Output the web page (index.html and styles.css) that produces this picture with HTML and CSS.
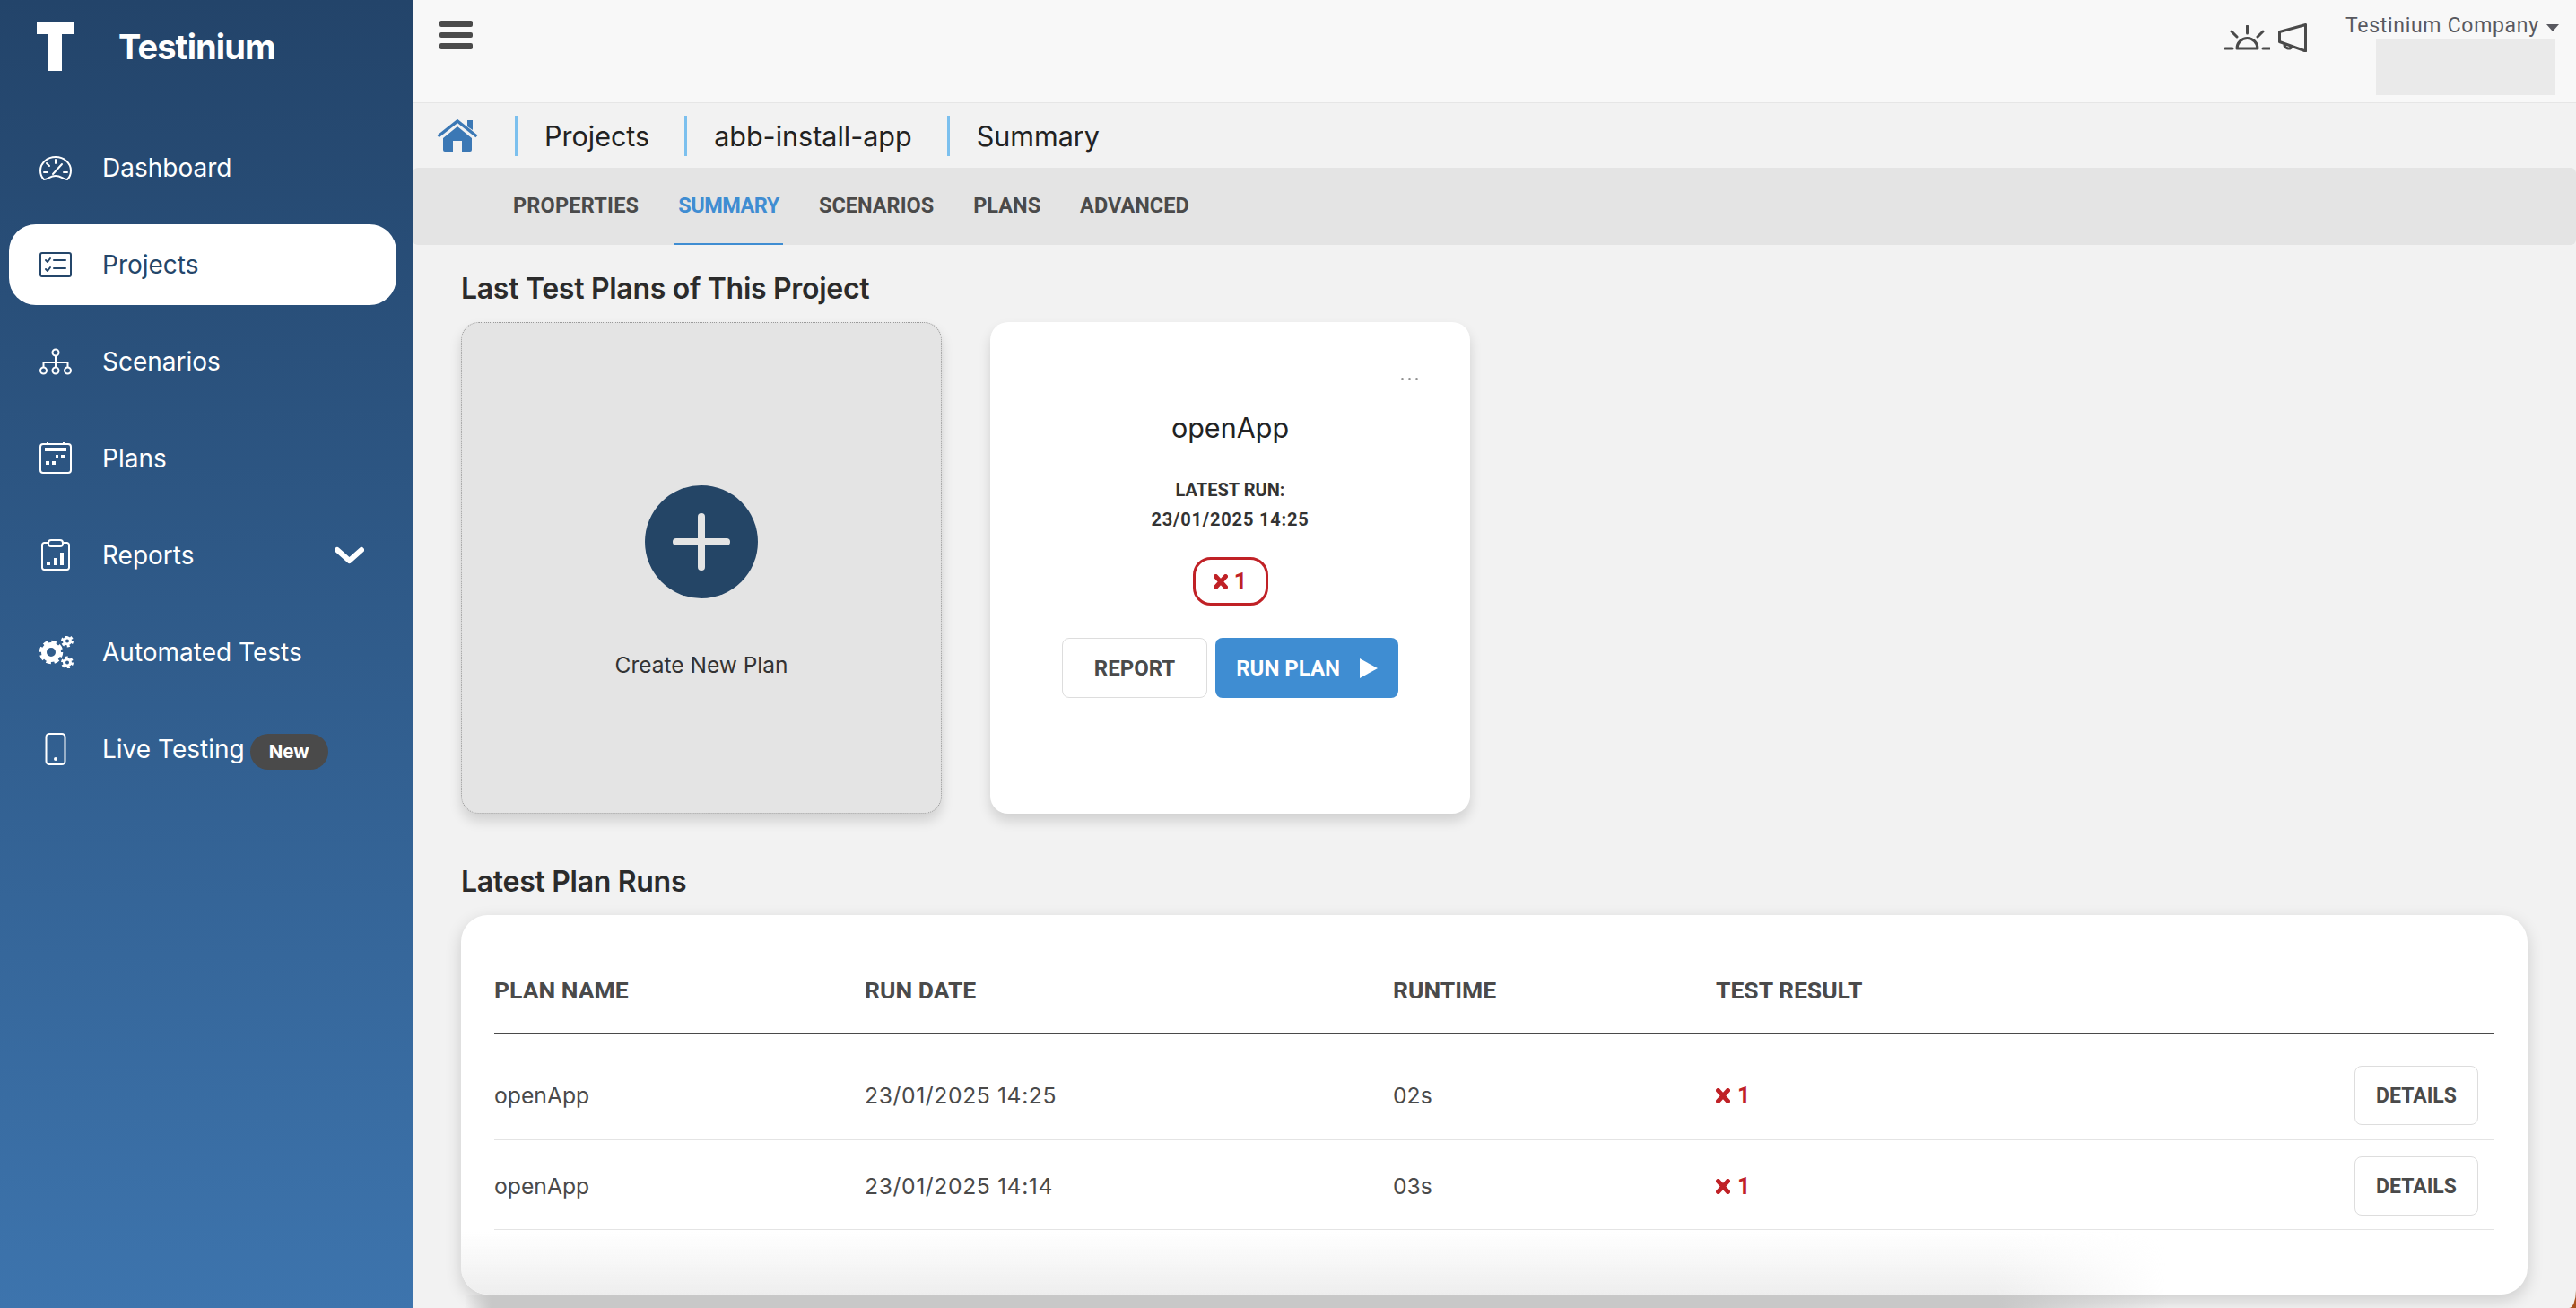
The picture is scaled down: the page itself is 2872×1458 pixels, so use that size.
FILE: index.html
```html
<!DOCTYPE html>
<html lang="en">
<head>
    <meta charset="UTF-8">
    <title>Testinium - Summary</title>
    <link rel="stylesheet" href="styles.css">
</head>
<body>
    <div class="app">
        <aside class="sidebar">
            <div class="brand">
                <svg class="brand-logo" viewBox="0 0 41 54"><path d="M0 0H41V13H28V54H13V13H0Z" fill="#fff"/></svg>
                <span class="brand-name">Testinium</span>
            </div>
            <nav class="nav">
                <a class="nav-item">
                    <svg class="nav-icon" viewBox="0 0 36 36"><path d="M5 31C1.500 28 1 24 1 21A17 15 0 0 1 35 21C35 24 34.500 28 31 31C27 31 24 27 18 27C12 27 9 31 5 31Z"/><path d="M18 9V13M8 13L11 16M5 23H9M27 23H31M15 25L25 14"/></svg>
                    <span>Dashboard</span>
                </a>
                <a class="nav-item active">
                    <svg class="nav-icon" viewBox="0 0 36 36"><rect x="1" y="5" width="34" height="26" rx="2"/><path d="M7 13L9 15L12 11M7 23L9 25L12 21M16 13H29M16 22H29"/></svg>
                    <span>Projects</span>
                </a>
                <a class="nav-item">
                    <svg class="nav-icon" viewBox="0 0 36 36"><circle cx="18" cy="8" r="3.500"/><circle cx="4.500" cy="28" r="3.500"/><circle cx="18" cy="28" r="3.500"/><circle cx="31.500" cy="28" r="3.500"/><path d="M18 12V24M4.500 24V19H31.500V24"/></svg>
                    <span>Scenarios</span>
                </a>
                <a class="nav-item">
                    <svg class="nav-icon" viewBox="0 0 36 36"><rect x="1" y="2" width="34" height="32" rx="3"/><path d="M9 0V2M27 0V2"/><path class="solid" d="M6 6H30V10H6ZM18 14H21V17H18ZM24 14H28V17H24ZM7 21H11V25H7ZM14 21H18V25H14Z"/></svg>
                    <span>Plans</span>
                </a>
                <a class="nav-item">
                    <svg class="nav-icon" viewBox="0 0 36 36"><path d="M9 4H5A2.500 2.500 0 0 0 3 6V32A2.500 2.500 0 0 0 5 34H31A2.500 2.500 0 0 0 33 32V6A2.500 2.500 0 0 0 31 4H27"/><rect x="10" y="1" width="16" height="7" rx="3"/><path class="solid" d="M8 25H12V29H8ZM16 21H20V29H16ZM23 15H27V29H23Z"/></svg>
                    <span>Reports</span>
                    <svg class="nav-chevron" viewBox="0 0 33 20"><path d="M3 4L16.500 16L30 4"/></svg>
                </a>
                <a class="nav-item">
                    <svg class="nav-icon gears" viewBox="0 0 38 36">
                        <circle class="gear-ring" cx="13" cy="18" r="8"/><circle class="gear-teeth" cx="13" cy="18" r="11"/>
                        <circle class="gear-ring small" cx="31" cy="5.500" r="3.500"/><circle class="gear-teeth small" cx="31" cy="5.500" r="5.500"/>
                        <circle class="gear-ring small" cx="31" cy="29.500" r="3.500"/><circle class="gear-teeth small" cx="31" cy="29.500" r="5.500"/>
                    </svg>
                    <span>Automated Tests</span>
                </a>
                <a class="nav-item">
                    <svg class="nav-icon" viewBox="0 0 36 36"><rect x="7.500" y="1" width="21" height="34" rx="3.500"/><circle class="solid" cx="18" cy="29" r="2"/></svg>
                    <span>Live Testing</span>
                    <span class="new-pill">New</span>
                </a>
            </nav>
        </aside>

        <div class="content">
            <header class="topbar">
                <div class="hamburger"><i></i><i></i><i></i></div>
                <div class="topbar-right">
                    <svg class="sun" viewBox="0 0 51 28"><path d="M1 26H9M43 26H51M25.500 1V9M8 7L14 13M43 7L37 13M14 26A11.500 11.500 0 0 1 37 26Z"/></svg>
                    <svg class="horn" viewBox="0 0 32 32"><path d="M1.500 9.500L30.500 1.500V31L1.500 20.500ZM7 23A4.500 4.500 0 0 0 15.500 25.500"/></svg>
                    <div class="company">
                        <div class="company-name">Testinium Company <i class="caret"></i></div>
                        <div class="company-box"></div>
                    </div>
                </div>
            </header>

            <div class="crumbs">
                <svg class="home" viewBox="0 0 46 36">
                    <path d="M34 1H40V12L34 8Z"/>
                    <path d="M1.500 19L23 2L44.500 19" fill="none" stroke="#3b78b5" stroke-width="3.500"/>
                    <path d="M7 21L23 8L39 21V34A2 2 0 0 1 37 36H28V24H18V36H9A2 2 0 0 1 7 34Z"/>
                </svg>
                <span class="crumb">Projects</span>
                <span class="crumb">abb-install-app</span>
                <span class="crumb">Summary</span>
            </div>

            <div class="tabs">
                <a class="tab first">PROPERTIES</a>
                <a class="tab active">SUMMARY</a>
                <a class="tab">SCENARIOS</a>
                <a class="tab">PLANS</a>
                <a class="tab">ADVANCED</a>
            </div>

            <main class="main">
                <h2 class="section-title">Last Test Plans of This Project</h2>
                <div class="cards">
                    <div class="card card-new">
                        <div class="plus"></div>
                        <p class="new-label">Create New Plan</p>
                    </div>
                    <div class="card card-plan">
                        <div class="more"><i></i><i></i><i></i></div>
                        <h3 class="plan-name">openApp</h3>
                        <p class="latest">LATEST RUN:</p>
                        <p class="latest date">23/01/2025 14:25</p>
                        <div class="fail-badge">
                            <svg class="x-mark" viewBox="0 0 16 17"><path d="M2.500 2.500L13.500 14.500M13.500 2.500L2.500 14.500"/></svg>
                            <span>1</span>
                        </div>
                        <div class="plan-actions">
                            <button class="btn">REPORT</button>
                            <button class="btn btn-run">RUN PLAN <svg class="play" viewBox="0 0 20 22"><path d="M0 0L20 11L0 22Z"/></svg></button>
                        </div>
                    </div>
                </div>

                <h2 class="section-title runs-title">Latest Plan Runs</h2>
                <div class="runs">
                    <table class="runs-table">
                        <thead>
                            <tr>
                                <th class="col-name">PLAN NAME</th>
                                <th class="col-date">RUN DATE</th>
                                <th class="col-time">RUNTIME</th>
                                <th>TEST RESULT</th>
                                <th></th>
                            </tr>
                        </thead>
                        <tbody>
                            <tr>
                                <td>openApp</td>
                                <td class="run-date">23/01/2025 14:25</td>
                                <td>02s</td>
                                <td><span class="fail"><svg class="x-mark" viewBox="0 0 16 17"><path d="M2.500 2.500L13.500 14.500M13.500 2.500L2.500 14.500"/></svg>1</span></td>
                                <td class="cell-action"><button class="btn btn-details">DETAILS</button></td>
                            </tr>
                            <tr>
                                <td>openApp</td>
                                <td class="run-date">23/01/2025 14:14</td>
                                <td>03s</td>
                                <td><span class="fail"><svg class="x-mark" viewBox="0 0 16 17"><path d="M2.500 2.500L13.500 14.500M13.500 2.500L2.500 14.500"/></svg>1</span></td>
                                <td class="cell-action"><button class="btn btn-details">DETAILS</button></td>
                            </tr>
                        </tbody>
                    </table>
                    <div class="runs-fade"></div>
                    <div class="runs-strip"></div>
                </div>
            </main>
        </div>
    </div>
</body>
</html>
```

FILE: styles.css
```css
* {
    box-sizing: border-box;
}
html, body {
    height: 100%;
}
body {
    margin: 0;
    overflow: hidden;
    font-family: Inter, "Liberation Sans", sans-serif;
    background: #f2f2f2;
    color: #333;
}
h2, h3, p {
    margin: 0;
}
.app {
    display: flex;
    height: 1458px;
    background: #a8521e;
}

/* sidebar */
.sidebar {
    width: 460px;
    flex: none;
    background: linear-gradient(#23446a, #3d74ad);
    color: #fff;
}
.brand {
    display: flex;
    align-items: flex-start;
    height: 142px;
    padding: 25px 0 0 41px;
}
.brand-logo {
    width: 41px;
    height: 54px;
}
.brand-name {
    margin: 5px 0 0 50px;
    font-size: 38px;
    font-weight: 700;
    letter-spacing: -0.9px;
    line-height: 44px;
}
.nav {
    display: flex;
    flex-direction: column;
    gap: 18px;
    padding: 0 18px 0 10px;
}
.nav-item {
    display: flex;
    align-items: center;
    height: 90px;
    padding-left: 34px;
    border-radius: 30px;
    font-size: 28px;
}
.nav-item.active {
    background: #fff;
    color: #24466a;
}
.nav-icon {
    width: 36px;
    height: 36px;
    margin-right: 34px;
    flex: none;
    fill: none;
    stroke: currentColor;
    stroke-width: 2;
    stroke-linecap: round;
    stroke-linejoin: round;
}
.nav-icon .solid {
    fill: currentColor;
    stroke: none;
}
.gears {
    width: 38px;
    margin-right: 32px;
}
.gear-ring {
    stroke-width: 6;
}
.gear-teeth {
    stroke-width: 4.500;
    stroke-dasharray: 5.200 3.440;
    stroke-linecap: butt;
}
.gear-ring.small {
    stroke-width: 3;
}
.gear-teeth.small {
    stroke-width: 3;
    stroke-dasharray: 2.900 2.860;
}
.nav-chevron {
    width: 33px;
    height: 20px;
    margin-left: auto;
    margin-right: 36px;
    fill: none;
    stroke: #fff;
    stroke-width: 6;
    stroke-linecap: round;
    stroke-linejoin: round;
}
.new-pill {
    margin: 6px 0 0 6px;
    padding: 0 21px;
    height: 40px;
    border-radius: 20px;
    background: #4a4a4a;
    font-size: 20.500px;
    font-weight: 700;
    line-height: 40px;
    color: #fff;
}

/* top of the content column */
.content {
    flex: 1;
    min-width: 0;
    display: flex;
    flex-direction: column;
    background: #f2f2f2;
    border-bottom-right-radius: 8px 20px;
}
.topbar {
    display: flex;
    justify-content: space-between;
    height: 115px;
    background: #f8f8f8;
    border-bottom: 1px solid #e6e6e6;
}
.hamburger {
    display: flex;
    flex-direction: column;
    gap: 6px;
    margin: 23px 0 0 30px;
}
.hamburger i {
    display: block;
    width: 37px;
    height: 6.500px;
    border-radius: 2px;
    background: #4a4a4a;
}
.topbar-right {
    display: flex;
    align-items: flex-start;
}
.sun {
    width: 51px;
    height: 28px;
    margin-top: 28px;
    fill: none;
    stroke: #4a4a4a;
    stroke-width: 3;
    stroke-linecap: round;
    stroke-linejoin: round;
}
.horn {
    width: 32px;
    height: 32px;
    margin: 26px 0 0 9px;
    fill: none;
    stroke: #4a4a4a;
    stroke-width: 3;
    stroke-linejoin: round;
}
.company {
    display: flex;
    flex-direction: column;
    align-items: flex-end;
    width: 257px;
    margin-left: 43px;
    padding-top: 14px;
}
.company-name {
    display: flex;
    align-items: center;
    width: 100%;
    height: 29px;
    font-family: Roboto, sans-serif;
    font-size: 23px;
    letter-spacing: 0.7px;
    color: #58585f;
    white-space: nowrap;
}
.caret {
    margin: 4px 0 0 8px;
    border-left: 7px solid transparent;
    border-right: 7px solid transparent;
    border-top: 8px solid #58585f;
}
.company-box {
    width: 200px;
    height: 63px;
    margin-right: 23px;
    background: #eaeaea;
}

.crumbs {
    display: flex;
    align-items: center;
    height: 72px;
    padding-left: 27px;
}
.home {
    width: 46px;
    height: 36px;
    margin-right: 41px;
    fill: #3b78b5;
}
.crumb {
    display: flex;
    align-items: center;
    height: 45px;
    padding: 0 39px 0 30px;
    border-left: 3px solid #7cc0ee;
    font-size: 30.500px;
    color: #222;
}
.tabs {
    display: flex;
    gap: 44px;
    height: 86px;
    padding-left: 112px;
    background: #e4e4e4;
    border-radius: 6px;
}
.tab {
    font-family: Roboto, sans-serif;
    font-size: 23.500px;
    font-weight: 700;
    line-height: 85px;
    color: #4a4a4a;
}
.tab.first {
    letter-spacing: 0.2px;
}
.tab.active {
    color: #3f8dd2;
    border-bottom: 2px solid #3f8dd2;
    margin: 0 -4px;
    padding: 0 4px;
    height: 86px;
    letter-spacing: -0.5px;
}

/* main */
.main {
    flex: 1;
    padding: 0 54px;
}
.section-title {
    padding-top: 26px;
    font-size: 32px;
    font-weight: 600;
    line-height: 46px;
    color: #2b2b2b;
    letter-spacing: -0.3px;
}
.cards {
    display: flex;
    gap: 54px;
    margin-top: 14px;
}
.card {
    width: 536px;
    height: 548px;
    border-radius: 20px;
    box-shadow: 0 8px 14px rgba(0, 0, 0, 0.14);
}
.card-new {
    display: flex;
    flex-direction: column;
    align-items: center;
    padding-top: 181px;
    background: #e4e4e4;
    border: 1px dotted #999;
}
.plus {
    position: relative;
    width: 126px;
    height: 126px;
    border-radius: 50%;
    background: #244566;
}
.plus::before, .plus::after {
    content: "";
    position: absolute;
    left: 31px;
    top: 59px;
    width: 64px;
    height: 8px;
    border-radius: 4px;
    background: #e4e4e4;
}
.plus::after {
    transform: rotate(90deg);
}
.new-label {
    margin-top: 59px;
    font-size: 24.500px;
    line-height: 30px;
    color: #333;
}
.card-plan {
    display: flex;
    flex-direction: column;
    align-items: center;
    width: 535px;
    background: #fff;
    padding-top: 62px;
}
.more {
    display: flex;
    gap: 5px;
    align-self: flex-end;
    margin-right: 58px;
}
.more i {
    width: 3px;
    height: 3px;
    border-radius: 50%;
    background: #8a8a8a;
}
.plan-name {
    margin-top: 33px;
    font-size: 30.500px;
    font-weight: 400;
    line-height: 40px;
    color: #222;
}
.latest {
    margin-top: 33px;
    font-family: Roboto, sans-serif;
    font-size: 20px;
    font-weight: 700;
    line-height: 33px;
    color: #333;
}
.latest.date {
    margin-top: 0;
    letter-spacing: 0.8px;
}
.fail-badge {
    display: flex;
    align-items: center;
    justify-content: center;
    gap: 7px;
    width: 84px;
    height: 54px;
    margin-top: 25px;
    border: 3px solid #c02126;
    border-radius: 20px;
    font-family: Roboto, sans-serif;
    font-size: 25px;
    font-weight: 700;
    color: #c02126;
}
.x-mark {
    width: 16px;
    height: 17px;
    fill: none;
    stroke: #c02126;
    stroke-width: 5;
    stroke-linecap: round;
}
.plan-actions {
    display: flex;
    gap: 9px;
    margin-top: 36px;
}
.btn {
    height: 67px;
    padding: 0 35px;
    border: 1px solid #ddd;
    border-radius: 8px;
    background: #fff;
    font-family: Roboto, sans-serif;
    font-size: 24px;
    font-weight: 700;
    color: #4a4a4a;
}
.btn-run {
    display: flex;
    align-items: center;
    justify-content: space-between;
    width: 204px;
    padding: 0 23px;
    border: 0;
    background: #3f8dd2;
    color: #fff;
}
.play {
    width: 20px;
    height: 22px;
    fill: #fff;
}

/* latest runs */
.runs {
    position: relative;
    width: 2304px;
    height: 423px;
    margin-top: 14px;
    padding: 42px 37px 0;
    background: #fff;
    border-radius: 30px;
    box-shadow: 0 6px 18px rgba(0, 0, 0, 0.16);
}
.runs-title {
    padding-top: 53px;
}
/* dark strip under the card, fades out at both ends */
.runs-strip {
    position: absolute;
    left: 4px;
    top: 100%;
    width: 1900px;
    height: 15px;
    background: linear-gradient(90deg, rgba(198, 198, 198, 0), #c8c8c8 30px, #c8c8c8 90%, rgba(198, 198, 198, 0));
}
.runs-table {
    width: 2230px;
    border-collapse: collapse;
    table-layout: fixed;
}
.runs-table th {
    height: 90px;
    padding: 0 0 6px;
    border-bottom: 1px solid #4a4a4a;
    text-align: left;
    font-family: Roboto, sans-serif;
    font-size: 26.500px;
    font-weight: 700;
    color: #4a4a4a;
}
.col-name {
    width: 413px;
}
.col-date {
    width: 589px;
}
.col-time {
    width: 360px;
}
.runs-table td {
    height: 100px;
    padding: 4px 0 0;
    border-bottom: 1px solid #e4e4e4;
    font-size: 24.700px;
    color: #4a4a4a;
}
.runs-table td.run-date {
    letter-spacing: 0.6px;
}
.runs-table tbody tr:first-child td {
    height: 118px;
    padding-top: 20px;
}
.cell-action {
    padding-right: 18px !important;
    text-align: right;
}
.btn-details {
    width: 138px;
    height: 66px;
    padding: 0;
    font-size: 23px;
}
.fail {
    display: inline-flex;
    align-items: center;
    gap: 8px;
    font-family: Roboto, sans-serif;
    font-size: 25px;
    font-weight: 700;
    color: #c02126;
}
.runs-fade {
    position: absolute;
    left: 0;
    bottom: 0;
    width: 1900px;
    height: 70px;
    background: linear-gradient(transparent, #eeeeee);
    border-radius: 0 0 0 30px;
    -webkit-mask-image: linear-gradient(90deg, #000 90%, transparent);
    mask-image: linear-gradient(90deg, #000 90%, transparent);
}
```
